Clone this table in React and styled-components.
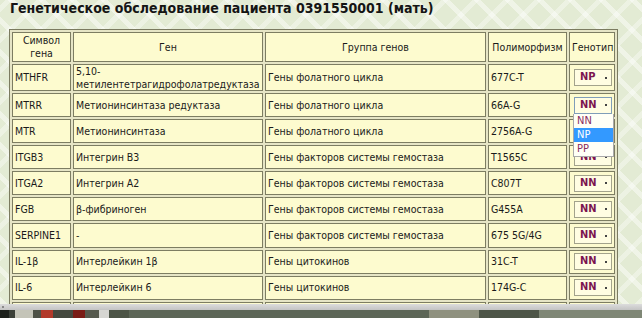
import React from 'react';
import styled, { createGlobalStyle } from 'styled-components';

const GlobalStyle = createGlobalStyle`
  html, body { margin: 0; padding: 0; }
  body {
    width: 642px;
    height: 318px;
    overflow: hidden;
    font-family: "DejaVu Sans Condensed", "DejaVu Sans", Verdana, sans-serif;
  }
`;

const Screen = styled.div`
  display: flex;
  flex-direction: column;
  width: 642px;
  height: 318px;
`;

const Page = styled.main`
  flex: 1;
  min-height: 0;
  overflow: hidden;
  padding-left: 9px;
  background-color: #e3ebd4;
  background-image:
    repeating-linear-gradient(45deg, rgba(255,255,255,0.45) 0 5px, transparent 5px 22px),
    repeating-linear-gradient(-45deg, rgba(255,255,255,0.35) 0 5px, transparent 5px 22px);
`;

const Title = styled.h1`
  margin: 0 0 13px 1px;
  font-size: 14px;
  line-height: 16px;
  font-weight: bold;
  color: #151515;
  white-space: nowrap;
`;

const Table = styled.table`
  width: 609px;
  table-layout: fixed;
  border-collapse: separate;
  border-spacing: 2px;
  border: 1px solid #7b7b60;
  background: #e6e5c6;
  font-size: 10.5px;
  color: #1a1a1a;
`;

const Row = styled.tr`
  height: ${p => p.$h}px;
`;

const HeadCell = styled.th`
  font-weight: normal;
  text-align: center;
  vertical-align: middle;
  line-height: 13px;
  padding: 0 2px;
  background: #fdfbcf;
  border: 1px solid #7d7d62;
  white-space: nowrap;
`;

const Cell = styled.td`
  text-align: left;
  vertical-align: middle;
  line-height: 12.5px;
  padding: 0 2px;
  background: #fdfbcf;
  border: 1px solid #7d7d62;
  white-space: ${p => (p.$wrap ? 'normal' : 'nowrap')};
`;

const Select = styled.div`
  position: relative;
  box-sizing: border-box;
  width: 38px;
  height: 17px;
  margin-left: 2px;
  display: flex;
  align-items: center;
  justify-content: space-between;
  padding: 0 4px 0 5px;
  border: 1px solid ${p => (p.$open ? '#7f9db9' : '#a3a38c')};
  background: #fffde2;
  font-size: 11px;
  font-weight: bold;
  color: #7b1450;
`;

const Arrow = styled.span`
  width: 2px;
  height: 2px;
  background: #444;
`;

const Dropdown = styled.ul`
  position: absolute;
  z-index: 2;
  top: calc(100% + 1px);
  left: -2px;
  width: 39px;
  margin: 0;
  padding: 0;
  list-style: none;
  background: #fffff6;
  border: 1px solid #a9a9a9;
  border-top: none;
`;

const Option = styled.li`
  height: 14px;
  line-height: 14px;
  padding-left: 3px;
  font-weight: normal;
  font-size: 11px;
  color: ${p => (p.$active ? '#ffffff' : '#8a2c60')};
  background: ${p => (p.$active ? '#3399ff' : 'transparent')};
`;

const HScroll = styled.div`
  height: 6px;
  display: flex;
  align-items: center;
  background: linear-gradient(#dcdcdc, #c3c3c3);
  padding-left: 2px;
`;

const ScrollArrow = styled.span`
  width: 2px;
  height: 2px;
  background: #8a8a8a;
`;

const Taskbar = styled.div`
  height: 8px;
  display: flex;
  background: #5a6152;
`;

const TaskBlock = styled.div`
  width: ${p => p.$w}px;
  background: ${p => p.$c};
`;

const genes = [
  ['MTHFR', '5,10-метилентетрагидрофолатредуктаза', 'Гены фолатного цикла', '677C-T', 'NP', 27],
  ['MTRR', 'Метионинсинтаза редуктаза', 'Гены фолатного цикла', '66A-G', 'NN', 24.1, true],
  ['MTR', 'Метионинсинтаза', 'Гены фолатного цикла', '2756A-G', 'NN', 24.1],
  ['ITGB3', 'Интегрин В3', 'Гены факторов системы гемостаза', 'T1565C', 'NN', 24.1],
  ['ITGA2', 'Интегрин А2', 'Гены факторов системы гемостаза', 'C807T', 'NN', 24.1],
  ['FGB', 'β-фибриноген', 'Гены факторов системы гемостаза', 'G455A', 'NN', 24.1],
  ['SERPINE1', '-', 'Гены факторов системы гемостаза', '675 5G/4G', 'NN', 24.1],
  ['IL-1β', 'Интерлейкин 1β', 'Гены цитокинов', '31C-T', 'NN', 24.1],
  ['IL-6', 'Интерлейкин 6', 'Гены цитокинов', '174G-C', 'NN', 24.1],
  ['', '', '', '', null, 24.1],
];

const taskBlocks = [
  [9, '#1d211c'], [6, '#3b4038'], [18, '#c4c4b8'], [8, '#4e5247'], [12, '#b23a2b'],
  [20, '#44483e'], [12, '#7a1c16'], [14, '#565a4e'], [10, '#d6d6d2'], [20, '#4c5446'],
  [300, '#5d6657'], [50, '#8f917f'], [60, '#4d5547'], [103, '#7f8776'],
];

function Genotype({ value, open }) {
  return (
    <Select $open={open}>
      {value}
      <Arrow />
      {open && (
        <Dropdown>
          {['NN', 'NP', 'PP'].map(o => (
            <Option key={o} $active={o === 'NP'}>{o}</Option>
          ))}
        </Dropdown>
      )}
    </Select>
  );
}

export default function App() {
  return (
    <Screen>
      <GlobalStyle />
      <Page>
        <Title>Генетическое обследование пациента 0391550001 (мать)</Title>
        <Table>
          <colgroup>
            <col style={{ width: 59 }} />
            <col style={{ width: 190 }} />
            <col style={{ width: 221 }} />
            <col style={{ width: 79 }} />
            <col style={{ width: 46 }} />
          </colgroup>
          <thead>
            <Row $h={30}>
              <HeadCell>Символ<br />гена</HeadCell>
              <HeadCell>Ген</HeadCell>
              <HeadCell>Группа генов</HeadCell>
              <HeadCell>Полиморфизм</HeadCell>
              <HeadCell>Генотип</HeadCell>
            </Row>
          </thead>
          <tbody>
            {genes.map(([sym, gene, group, poly, geno, h, open], i) => (
              <Row key={i} $h={h}>
                <Cell>{sym}</Cell>
                <Cell $wrap>{gene}</Cell>
                <Cell>{group}</Cell>
                <Cell>{poly}</Cell>
                <Cell>{geno && <Genotype value={geno} open={open} />}</Cell>
              </Row>
            ))}
          </tbody>
        </Table>
      </Page>
      <HScroll>
        <ScrollArrow />
      </HScroll>
      <Taskbar>
        {taskBlocks.map(([w, c], i) => (
          <TaskBlock key={i} $w={w} $c={c} />
        ))}
      </Taskbar>
    </Screen>
  );
}
